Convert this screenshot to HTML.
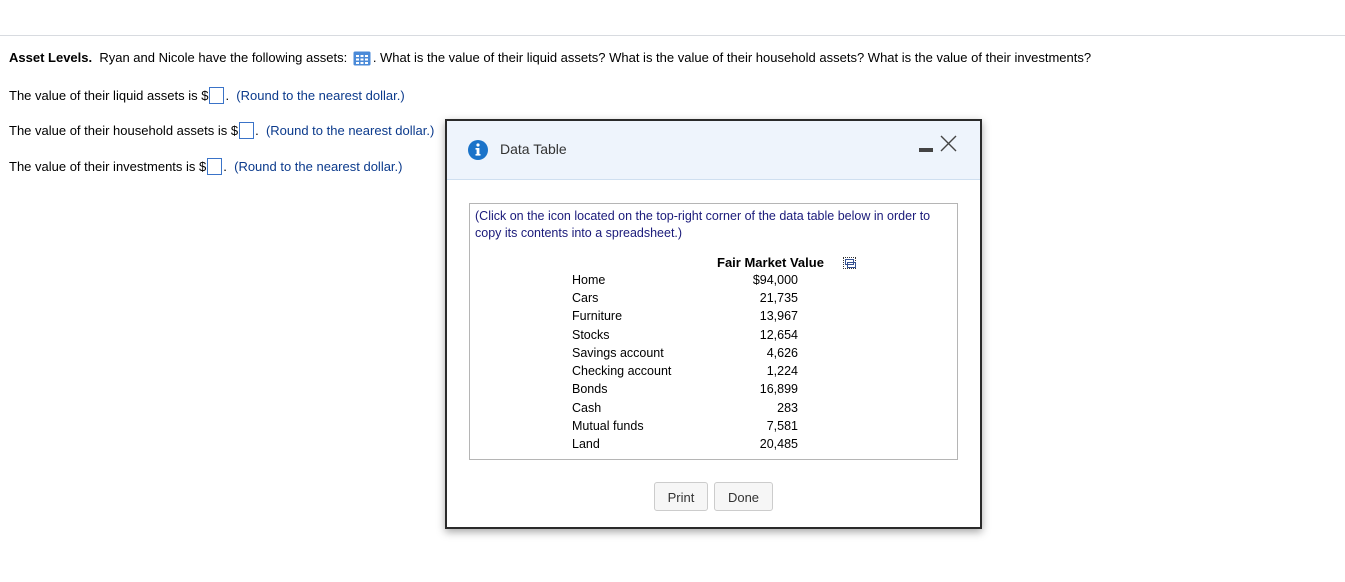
<!DOCTYPE html>
<html><head><style>
body{margin:0;width:1345px;height:582px;background:#fff;font-family:"Liberation Sans",Arial,sans-serif;font-size:13px;color:#000;position:relative;overflow:hidden}
.a{position:absolute;white-space:nowrap}
.b{color:#0b3a8c}
.box{display:inline-block;width:15px;height:17px;border:1px solid #3a73c8;vertical-align:middle;margin:0 1px;box-sizing:border-box;position:relative;top:-1px}
#dlg{position:absolute;left:445px;top:119px;width:533px;height:406px;border:2px solid #2a2a2a;background:#fff;box-shadow:0 3px 8px rgba(0,0,0,.35)}
#hdr{position:absolute;left:0;top:0;width:533px;height:58px;background:#eef4fc;border-bottom:1px solid #cfdff0}
#inner{position:absolute;left:22px;top:82px;width:487px;height:255px;border:1px solid #b5b5b5;font-size:12.5px}
.btn{position:absolute;top:361px;height:29px;border:1px solid #ccc;border-radius:3px;background:#f6f6f6;color:#333;font-size:13px;line-height:29px;text-align:center;box-sizing:border-box}
.r{position:absolute;left:102px;width:226px;height:18px}
.r span{position:absolute;right:0}
</style></head><body>
<div style="position:absolute;left:0;top:35px;width:1345px;height:1px;background:#d8dbe0"></div>
<div class="a" style="left:9px;top:50px"><b>Asset Levels.</b>&nbsp; Ryan and Nicole have the following assets:
<svg width="18" height="15" viewBox="0 0 18 15" style="vertical-align:middle;margin:0 2px"><rect x="0.5" y="0.5" width="17" height="14" rx="1.5" fill="#4a8ad8"/><g fill="#fff"><rect x="3" y="4" width="3" height="2"/><rect x="7.5" y="4" width="3" height="2"/><rect x="12" y="4" width="3" height="2"/><rect x="3" y="7.5" width="3" height="2"/><rect x="7.5" y="7.5" width="3" height="2"/><rect x="12" y="7.5" width="3" height="2"/><rect x="3" y="11" width="3" height="2"/><rect x="7.5" y="11" width="3" height="2"/><rect x="12" y="11" width="3" height="2"/></g></svg>. What is the value of their liquid assets? What is the value of their household assets? What is the value of their investments?</div>
<div class="a" style="left:9px;top:88px">The value of their liquid assets is $<span class="box"></span>. &nbsp;<span class="b">(Round to the nearest dollar.)</span></div>
<div class="a" style="left:9px;top:123px">The value of their household assets is $<span class="box"></span>. &nbsp;<span class="b">(Round to the nearest dollar.)</span></div>
<div class="a" style="left:9px;top:159px">The value of their investments is $<span class="box"></span>. &nbsp;<span class="b">(Round to the nearest dollar.)</span></div>
<div id="dlg">
<div id="hdr">
<svg style="position:absolute;left:21px;top:19px" width="20" height="20" viewBox="0 0 20 20"><circle cx="10" cy="10" r="10" fill="#1a73c9"/><rect x="8.6" y="8" width="2.8" height="7.5" fill="#fff"/><rect x="7.5" y="8" width="3" height="1.6" fill="#fff"/><rect x="7.5" y="14" width="5" height="1.6" fill="#fff"/><circle cx="10" cy="5" r="1.6" fill="#fff"/></svg>
<div class="a" style="left:53px;top:20px;font-size:14px;color:#333">Data Table</div>
<div style="position:absolute;left:472px;top:27px;width:14px;height:4px;background:#444"></div>
<svg style="position:absolute;left:493px;top:14px" width="17" height="17" viewBox="0 0 17 17"><path d="M1 1L16 16M16 1L1 16" stroke="#444" stroke-width="1.4"/></svg>
</div>
<div id="inner">
<div class="a" style="left:5px;top:4px;color:#1a1a7a;font-size:12.5px;line-height:16.5px;white-space:normal;width:482px">(Click on the icon located on the top-right corner of the data table below in order to copy its contents into a spreadsheet.)</div>
<div class="a" style="left:247px;top:51px;font-weight:bold;font-size:13px">Fair Market Value</div>
<div style="position:absolute;left:373px;top:53px;width:11px;height:10px;border:1px dotted #333"><div style="position:absolute;left:1px;top:1px;width:7px;height:4px;border:1px solid #35508f"></div><div style="position:absolute;left:3px;top:4px;width:7px;height:4px;border:1px solid #35508f"></div></div>
<div class="r" style="top:69px">Home<span>$94,000</span></div>
<div class="r" style="top:87px">Cars<span>21,735</span></div>
<div class="r" style="top:105px">Furniture<span>13,967</span></div>
<div class="r" style="top:124px">Stocks<span>12,654</span></div>
<div class="r" style="top:142px">Savings account<span>4,626</span></div>
<div class="r" style="top:160px">Checking account<span>1,224</span></div>
<div class="r" style="top:178px">Bonds<span>16,899</span></div>
<div class="r" style="top:197px">Cash<span>283</span></div>
<div class="r" style="top:215px">Mutual funds<span>7,581</span></div>
<div class="r" style="top:233px">Land<span>20,485</span></div>
</div>
<div class="btn" style="left:207px;width:54px">Print</div>
<div class="btn" style="left:267px;width:59px">Done</div>
</div>
</body></html>
